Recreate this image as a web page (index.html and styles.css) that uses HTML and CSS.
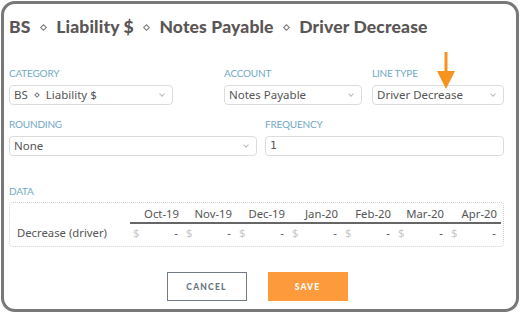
FILE: index.html
```html
<!DOCTYPE html>
<html>
<head>
<meta charset="utf-8">
<link rel="stylesheet" href="styles.css">
</head>
<body>
<div class="frame">
  <h1 class="title">BS <span class="sep"></span> Liability $ <span class="sep"></span> Notes Payable <span class="sep"></span> Driver Decrease</h1>

  <div class="row row1">
    <div class="field">
      <div class="label">CATEGORY</div>
      <div class="select w-cat">BS <span class="sep small"></span> Liability $<span class="chev"></span></div>
    </div>
    <div class="field">
      <div class="label">ACCOUNT</div>
      <div class="select w-acc">Notes Payable<span class="chev"></span></div>
    </div>
    <div class="field">
      <div class="label">LINE TYPE</div>
      <div class="select w-line">Driver Decrease<span class="chev"></span></div>
    </div>
  </div>

  <div class="row row2">
    <div class="field">
      <div class="label">ROUNDING</div>
      <div class="select">None<span class="chev"></span></div>
    </div>
    <div class="field">
      <div class="label">FREQUENCY</div>
      <div class="select mono">1</div>
    </div>
  </div>

  <div class="label data-label">DATA</div>
  <div class="data">
    <div class="trow head">
      <div class="rlabel"></div>
      <div class="cell">Oct-19</div>
      <div class="cell">Nov-19</div>
      <div class="cell">Dec-19</div>
      <div class="cell">Jan-20</div>
      <div class="cell">Feb-20</div>
      <div class="cell">Mar-20</div>
      <div class="cell">Apr-20</div>
    </div>
    <div class="trow body">
      <div class="rlabel">Decrease (driver)</div>
      <div class="cell val"><span class="cur">$</span><span>-</span></div>
      <div class="cell val"><span class="cur">$</span><span>-</span></div>
      <div class="cell val"><span class="cur">$</span><span>-</span></div>
      <div class="cell val"><span class="cur">$</span><span>-</span></div>
      <div class="cell val"><span class="cur">$</span><span>-</span></div>
      <div class="cell val"><span class="cur">$</span><span>-</span></div>
      <div class="cell val"><span class="cur">$</span><span>-</span></div>
    </div>
  </div>

  <div class="actions">
    <button class="btn cancel">CANCEL</button>
    <button class="btn save">SAVE</button>
  </div>

  <svg class="arrow" width="20" height="40" viewBox="0 0 20 40">
    <path d="M10 1 L10 22" stroke="#f7921e" stroke-width="3" stroke-linecap="round" fill="none"/>
    <path d="M1 19 L19 19 L10 37 Z" fill="#f7921e"/>
  </svg>
</div>
</body>
</html>
```

FILE: styles.css
```css
* { box-sizing: border-box; }
html, body { margin: 0; padding: 0; background: #fff; }
body {
  width: 520px;
  height: 313px;
  font-family: "Noto Sans", "Open Sans", sans-serif;
  color: #555;
}
.frame {
  position: relative;
  margin: 1px;
  width: 518px;
  height: 311px;
  border: 3px solid #787878;
  border-radius: 14px;
  padding: 0 11px 0 5px;
}
.title {
  margin: 12px 0 0 0;
  font-family: "Lato", sans-serif;
  font-weight: 900;
  font-size: 17.5px;
  line-height: 22px;
  color: #5b5656;
  letter-spacing: 0.15px;
  white-space: nowrap;
}
.sep {
  display: inline-block;
  width: 5px;
  height: 5px;
  border: 1px solid #777;
  transform: rotate(45deg);
  vertical-align: middle;
  margin: -2px 6px 0 6px;
}
.sep.small {
  width: 4px;
  height: 4px;
  margin: -2px 4px 0 4px;
}
.row { display: grid; }
.row1 {
  margin-top: 29px;
  grid-template-columns: 215px 148px 132px;
}
.row2 {
  margin-top: 13px;
  grid-template-columns: 248px 239px;
  column-gap: 8px;
}
.label {
  font-family: "Lato", sans-serif;
  font-size: 10px;
  line-height: 12px;
  color: #72a9c7;
  letter-spacing: -0.2px;
  margin-bottom: 6px;
}
.select {
  position: relative;
  height: 20px;
  border: 1px solid #dcdcdc;
  border-radius: 4px;
  font-size: 11.5px;
  line-height: 18px;
  padding-left: 4px;
  color: #555;
  white-space: nowrap;
}
.w-cat { width: 164px; }
.w-acc { width: 138px; }
.w-line { width: 132px; }
.mono {
  font-family: "DejaVu Sans Mono", monospace;
  font-size: 11px;
}
.chev {
  position: absolute;
  right: 8px;
  top: 6px;
  width: 4px;
  height: 4px;
  border-right: 1px solid #bbb;
  border-bottom: 1px solid #bbb;
  transform: rotate(45deg);
}
.data-label {
  margin-top: 29px;
  margin-bottom: 5px;
}
.data {
  width: 495px;
  height: 45px;
  border: 1px dotted #d0d0d0;
  border-radius: 4px;
  padding: 4px 3px 0 7px;
}
.trow {
  display: grid;
  grid-template-columns: 113px repeat(7, 53px);
  font-size: 11.3px;
  line-height: 14px;
}
.head .cell {
  text-align: right;
  padding-right: 4px;
  color: #555;
  border-bottom: 2px solid #666;
  padding-bottom: 1px;
}
.body { margin-top: 2px; }
.rlabel { color: #555; white-space: nowrap; }
.val {
  display: flex;
  justify-content: space-between;
  padding: 0 5px 0 3px;
  color: #555;
}
.cur { color: #c8c8c8; }
.actions {
  display: flex;
  justify-content: center;
  gap: 21px;
  margin-top: 25px;
}
.btn {
  width: 80px;
  height: 29px;
  font-family: "Lato", sans-serif;
  font-weight: 900;
  font-size: 8.5px;
  letter-spacing: 1.2px;
  border-radius: 0;
  cursor: pointer;
}
.cancel {
  background: #fff;
  border: 1px solid #6f7c88;
  color: #6a7480;
}
.save {
  background: #fd9a3b;
  border: 1px solid #fd9a3b;
  color: #fff;
}
.arrow {
  position: absolute;
  left: 432px;
  top: 48px;
}
```
